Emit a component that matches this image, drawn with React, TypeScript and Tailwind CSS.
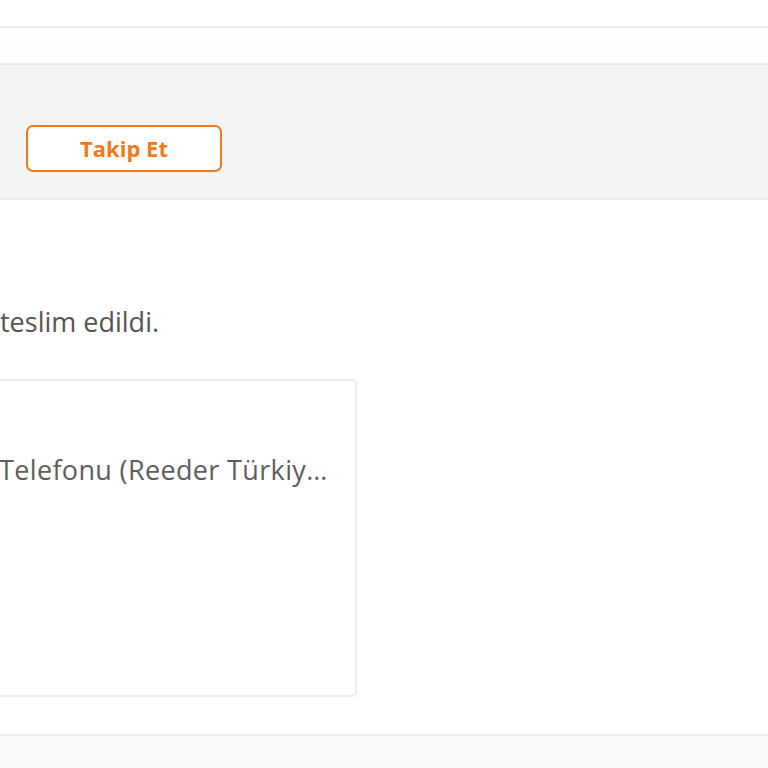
import React from "react";

export default function App() {
  return (
    <div
      className="w-[768px] h-[768px] overflow-hidden bg-white flex flex-col"
      style={{ fontFamily: '"Open Sans", "Noto Sans", sans-serif' }}
    >
      <div className="h-[26px] shrink-0 bg-white" />
      <div className="h-[39px] shrink-0 border-y-2 border-[#ececec] bg-[#fdfdfd]" />
      <div className="h-[135px] shrink-0 bg-[#f4f4f4] border-b-2 border-[#ececec] flex items-center pl-[26px] pt-[34px]">
        <button className="w-[196px] h-[47px] rounded-[7px] border-2 border-[#f27a1a] bg-white text-[#f27a1a] font-bold text-[22px] flex items-center justify-center">
          Takip Et
        </button>
      </div>
      <div className="h-[104px] shrink-0" />
      <div className="text-[27px] leading-[36px] text-[#555555] whitespace-nowrap">
        teslim edildi.
      </div>
      <div className="h-[39px] shrink-0" />
      <div className="-ml-[10px] w-[367px] h-[318px] shrink-0 rounded-[5px] border-2 border-[#ececec] bg-white pt-[71px] pl-[7px]">
        <div className="whitespace-nowrap text-[27px] leading-[36px] text-[#5e5e5e] tracking-[0.35px]">
          Telefonu (Reeder Türkiy…
        </div>
      </div>
      <div className="h-[37px] shrink-0" />
      <div className="flex-1 border-t-2 border-[#ececec] bg-[#fafafa]" />
    </div>
  );
}
